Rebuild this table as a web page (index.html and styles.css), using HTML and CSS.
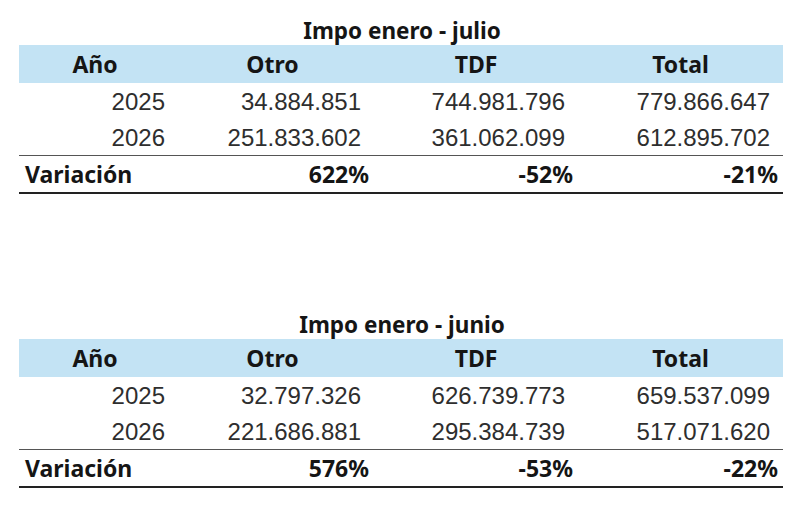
FILE: index.html
```html
<!DOCTYPE html>
<html lang="es">
<head>
<meta charset="utf-8">
<title>Impo</title>
<link rel="stylesheet" href="styles.css">
</head>
<body>
<div class="page">
  <section class="block">
    <div class="title">Impo enero - julio</div>
    <div class="grid head">
      <div class="h">Año</div><div class="h">Otro</div><div class="h">TDF</div><div class="h">Total</div>
    </div>
    <div class="grid row r1">
      <div class="y">2025</div><div class="n">34.884.851</div><div class="n">744.981.796</div><div class="n">779.866.647</div>
    </div>
    <div class="grid row r2">
      <div class="y">2026</div><div class="n">251.833.602</div><div class="n">361.062.099</div><div class="n">612.895.702</div>
    </div>
    <div class="grid row var">
      <div class="lab">Variación</div><div class="p">622%</div><div class="p">-52%</div><div class="p">-21%</div>
    </div>
  </section>
  <section class="block second">
    <div class="title">Impo enero - junio</div>
    <div class="grid head">
      <div class="h">Año</div><div class="h">Otro</div><div class="h">TDF</div><div class="h">Total</div>
    </div>
    <div class="grid row r1">
      <div class="y">2025</div><div class="n">32.797.326</div><div class="n">626.739.773</div><div class="n">659.537.099</div>
    </div>
    <div class="grid row r2">
      <div class="y">2026</div><div class="n">221.686.881</div><div class="n">295.384.739</div><div class="n">517.071.620</div>
    </div>
    <div class="grid row var">
      <div class="lab">Variación</div><div class="p">576%</div><div class="p">-53%</div><div class="p">-22%</div>
    </div>
  </section>
</div>
</body>
</html>
```

FILE: styles.css
```css
html, body {
  margin: 0;
  padding: 0;
  background: #ffffff;
}
.page {
  padding: 15px 0 0 19px;
  width: 764px;
}
.block {
  display: flex;
  flex-direction: column;
}
.second {
  margin-top: 115px;
}
.title {
  height: 30px;
  display: flex;
  align-items: center;
  justify-content: center;
  padding-left: 2px;
  font-family: "Noto Sans", sans-serif;
  font-weight: 700;
  font-size: 22.5px;
  color: #151515;
}
.grid {
  display: grid;
  grid-template-columns: 152px 203px 204px 205px;
  align-items: center;
}
.head {
  height: 38px;
  background: #c3e3f4;
}
.h {
  text-align: center;
  font-family: "Noto Sans", sans-serif;
  font-weight: 700;
  font-size: 23px;
  color: #151515;
}
.row {
  font-family: "Liberation Sans", Arial, sans-serif;
  font-size: 24px;
  color: #2e2e2e;
}
.r1 { height: 37px; }
.r2 { height: 35px; border-bottom: 1px solid #555555; }
.var { height: 36px; border-bottom: 2px solid #222222; }
.y {
  text-align: right;
  padding-right: 6px;
}
.n {
  text-align: right;
  padding-right: 13px;
}
.lab, .p {
  font-family: "Noto Sans", sans-serif;
  font-weight: 700;
  font-size: 23px;
  color: #151515;
}
.lab {
  padding-left: 6px;
}
.p {
  text-align: right;
  padding-right: 5px;
}
```
